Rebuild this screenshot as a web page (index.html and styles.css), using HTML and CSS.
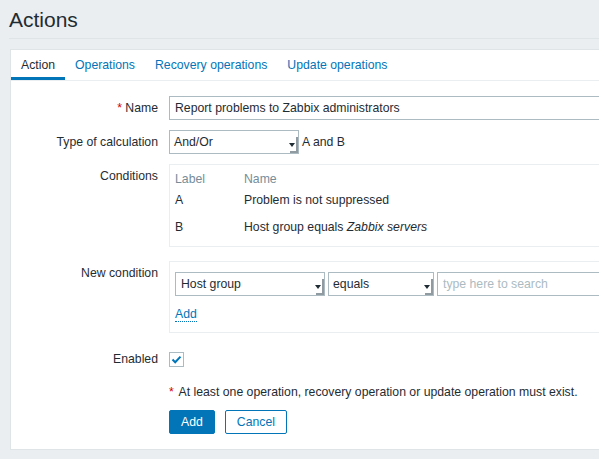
FILE: index.html
```html
<!DOCTYPE html>
<html>
<head>
<meta charset="utf-8">
<title>Actions</title>
<link rel="stylesheet" href="styles.css">
</head>
<body>
<header class="page-header">
  <h1 class="page-title">Actions</h1>
</header>
<main class="panel">
  <ul class="tabs">
    <li class="tab tab-active">Action</li>
    <li class="tab">Operations</li>
    <li class="tab">Recovery operations</li>
    <li class="tab">Update operations</li>
  </ul>
  <form class="form">
    <div class="row row-name">
      <label class="label"><span class="asterisk">*</span> Name</label>
      <div class="field">
        <div class="input input-name">Report problems to Zabbix administrators</div>
      </div>
    </div>
    <div class="row row-calc">
      <label class="label">Type of calculation</label>
      <div class="field field-inline">
        <div class="select select-calc">And/Or<span class="select-shade"></span><span class="select-arrow"></span></div>
        <span class="calc-text">A and B</span>
      </div>
    </div>
    <div class="row row-conditions">
      <label class="label">Conditions</label>
      <div class="field">
        <div class="box conditions-box">
          <div class="cond-line cond-head"><span class="cond-label">Label</span><span class="cond-name">Name</span></div>
          <div class="cond-line cond-row"><span class="cond-label">A</span><span class="cond-name">Problem is not suppressed</span></div>
          <div class="cond-line cond-row"><span class="cond-label">B</span><span class="cond-name">Host group equals <em>Zabbix servers</em></span></div>
        </div>
      </div>
    </div>
    <div class="row row-new">
      <label class="label">New condition</label>
      <div class="field">
        <div class="box new-box">
          <div class="new-controls">
            <div class="select select-group">Host group<span class="select-shade"></span><span class="select-arrow"></span></div>
            <div class="select select-op">equals<span class="select-shade"></span><span class="select-arrow"></span></div>
            <div class="input input-search">type here to search</div>
          </div>
          <a class="link-add">Add</a>
        </div>
      </div>
    </div>
    <div class="row row-enabled">
      <label class="label">Enabled</label>
      <div class="field">
        <span class="checkbox"><svg width="15" height="15" viewBox="0 0 15 15"><path d="M3.5 7.5 L6.2 10.2 L11.5 4.6" fill="none" stroke="#0275b8" stroke-width="2"/></svg></span>
      </div>
    </div>
    <div class="row row-note">
      <div class="label"></div>
      <div class="field note"><span class="asterisk">*</span> At least one operation, recovery operation or update operation must exist.</div>
    </div>
    <div class="row row-buttons">
      <div class="label"></div>
      <div class="field buttons">
        <button type="button" class="btn btn-primary">Add</button>
        <button type="button" class="btn btn-alt">Cancel</button>
      </div>
    </div>
  </form>
</main>
</body>
</html>
```

FILE: styles.css
```css
html, body {
  margin: 0;
  padding: 0;
}
body {
  background: #ebeef0;
  font-family: "Liberation Sans", Arial, sans-serif;
  font-size: 12.25px;
  color: #1f2c33;
  overflow: hidden;
  width: 599px;
  height: 459px;
}
.page-header {
  margin-left: 9px;
  padding-top: 8px;
  padding-bottom: 6px;
  border-bottom: 1px solid #dfe4e7;
}
.page-title {
  margin: 0;
  font-size: 21px;
  font-weight: normal;
  line-height: 24px;
}
.panel {
  display: block;
  margin: 10px 0 0 10px;
  width: 700px;
  background: #fff;
  border: 1px solid #dfe4e7;
}
.tabs {
  display: flex;
  list-style: none;
  margin: 0;
  padding: 0;
  border-bottom: 1px solid #ebeef0;
}
.tab {
  height: 30px;
  line-height: 30px;
  padding: 0 10px;
  color: #0275b8;
  box-sizing: border-box;
}
.tab-active {
  color: #1f2c33;
  border-bottom: 3px solid #0275b8;
}
.form {
  padding: 15px 0 15px 0;
}
.row {
  display: flex;
  align-items: flex-start;
}
.label {
  width: 147px;
  margin-right: 11px;
  text-align: right;
  line-height: 24px;
  flex: none;
}
.field {
  flex: 1;
  min-width: 0;
}
.field-inline {
  display: flex;
  align-items: center;
}
.row-name, .row-calc {
  margin-bottom: 10px;
}
.row-conditions, .row-new {
  margin-bottom: 14px;
}
.asterisk {
  color: #d40000;
}
.input {
  box-sizing: border-box;
  height: 24px;
  line-height: 22px;
  border: 1px solid #acbbc2;
  padding: 0 5px;
  background: #fff;
  white-space: nowrap;
  overflow: hidden;
}
.input-name {
  width: 453px;
}
.select {
  position: relative;
  box-sizing: border-box;
  height: 24px;
  line-height: 22px;
  border: 1px solid #acbbc2;
  padding: 0 4px;
  background: #fff;
  white-space: nowrap;
  flex: none;
}
.select-shade {
  position: absolute;
  right: 0;
  bottom: 0;
  width: 6px;
  height: 14px;
  border-right: 2px solid #8f9ba1;
  border-bottom: 2px solid #8f9ba1;
}
.select-arrow {
  position: absolute;
  right: 3px;
  top: 12px;
  width: 0;
  height: 0;
  border-left: 3px solid transparent;
  border-right: 3px solid transparent;
  border-top: 4px solid #1f2c33;
}
.select-calc {
  width: 130px;
}
.calc-text {
  margin-left: 3px;
}
.box {
  border: 1px solid #ebeef0;
  box-sizing: border-box;
}
.conditions-box {
  padding: 7px 5px 5px 5px;
  height: 83px;
}
.cond-line {
  display: flex;
}
.cond-head {
  height: 15px;
  line-height: 14px;
  color: #768d99;
}
.cond-row {
  height: 27px;
  line-height: 27px;
}
.cond-label {
  width: 69px;
  flex: none;
}
.new-box {
  height: 72px;
  padding: 10px 5px 0 5px;
}
.new-controls {
  display: flex;
  gap: 3px;
}
.select-group {
  width: 150px;
  padding-left: 5px;
}
.select-op {
  width: 106px;
}
.input-search {
  width: 300px;
  color: #acbbc2;
}
.link-add {
  display: inline-block;
  margin-top: 11px;
  color: #0275b8;
  line-height: 14px;
  border-bottom: 1px dotted #0275b8;
  cursor: pointer;
}
.checkbox {
  display: block;
  width: 15px;
  height: 15px;
  margin-top: 5px;
  box-sizing: border-box;
  border: 1px solid #acbbc2;
  background: #fff;
}
.checkbox svg {
  display: block;
  margin: -1px 0 0 -1px;
}
.row-note {
  margin-top: 14px;
}
.note {
  line-height: 14px;
}
.note .asterisk {
  margin-right: 2px;
}
.row-buttons {
  margin-top: 11px;
}
.buttons {
  display: flex;
  gap: 10px;
}
.btn {
  box-sizing: border-box;
  height: 24px;
  padding: 0 11px;
  font-family: "Liberation Sans", Arial, sans-serif;
  font-size: 12.25px;
  border: 1px solid #0275b8;
  border-radius: 2px;
  line-height: 22px;
  cursor: pointer;
}
.btn-primary {
  background: #0275b8;
  color: #fff;
}
.btn-alt {
  background: #fff;
  color: #0275b8;
}
```
